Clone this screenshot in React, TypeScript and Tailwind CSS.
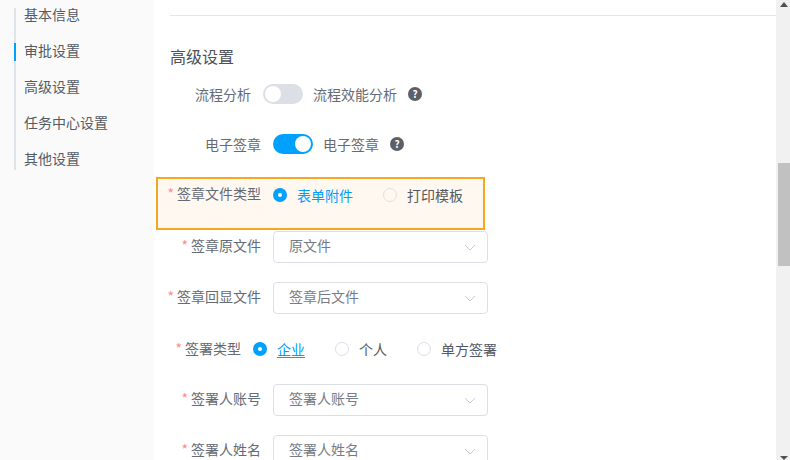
const menuItems = ['基本信息', '审批设置', '高级设置', '任务中心设置', '其他设置']

function HelpIcon() {
  return (
    <span className="-ml-px flex h-[14px] w-[14px] items-center justify-center rounded-full bg-[#5c5f66] text-[10px] font-bold leading-none text-white">
      ?
    </span>
  )
}

function Toggle({ on }: { on: boolean }) {
  return (
    <span
      className={`flex h-5 w-10 items-center rounded-full p-[2px] ${
        on ? 'justify-end bg-[#00a0ff]' : 'justify-start bg-[#dcdfe6]'
      }`}
    >
      <span className="h-4 w-4 rounded-full bg-white" />
    </span>
  )
}

function Label({ text, required, width, className }: { text: string; required?: boolean; width: string; className?: string }) {
  return (
    <span className={`${width} ${className ?? ''} flex shrink-0 justify-end whitespace-nowrap text-[14px] text-[#666a73]`}>
      {required && <span className="mr-[3px] text-[#ff8a8a]">*</span>}
      {text}
    </span>
  )
}

function Radio({ text, checked, underline, muted }: { text: string; checked?: boolean; underline?: boolean; muted?: boolean }) {
  return (
    <span className="flex items-center gap-[10px]">
      {checked ? (
        <span className="flex h-[14px] w-[14px] items-center justify-center rounded-full bg-[#00a0ff]">
          <span className="h-1 w-1 rounded-full bg-white" />
        </span>
      ) : (
        <span className={`h-[14px] w-[14px] rounded-full border ${muted ? 'border-[#e4e0da]' : 'border-[#dcdfe6]'}`} />
      )}
      <span className={`text-[14px] ${checked ? 'text-[#00a0ff]' : 'text-[#55585f]'} ${underline ? 'underline underline-offset-2' : ''}`}>
        {text}
      </span>
    </span>
  )
}

function SelectRow({ label, value, width, className }: { label: string; value: string; width: string; className?: string }) {
  return (
    <div className={`flex h-8 shrink-0 items-center gap-3 ${className ?? ''}`}>
      <Label text={label} required width={width} className="mb-1" />
      <div className="flex h-8 w-[215px] items-center justify-between rounded border border-[#dcdfe6] bg-white pl-[15px] pr-[11px] text-[14px] text-[#777b84]">
        <span className="mb-1">{value}</span>
        <svg width="12" height="7" viewBox="0 0 12 7" fill="none" stroke="#c8ccd4" strokeWidth="1">
          <path d="M1 1l5 5 5-5" />
        </svg>
      </div>
    </div>
  )
}

export default function App() {
  return (
    <div
      className="flex h-[460px] w-[790px] overflow-hidden bg-white"
      style={{ fontFamily: '"Noto Sans CJK SC", "Noto Sans", sans-serif' }}
    >
      <aside className="w-[154px] shrink-0 bg-[#fafafa] pl-[14px] pt-2">
        <div className="flex h-[162px] flex-col border-l-2 border-[#dfe3ea]">
          {menuItems.map((item, i) => (
            <div key={item} className={`flex h-9 shrink-0 items-center text-[14px] text-[#555a63] ${i === 0 ? '-mt-[11px]' : ''}`}>
              <span className={`-ml-[2px] mt-[2px] h-[18px] w-[2px] shrink-0 ${i === 1 ? 'bg-[#00a0ff]' : ''}`} />
              <span className="mb-[2px] ml-[8px]">{item}</span>
            </div>
          ))}
        </div>
      </aside>

      <main className="flex min-w-0 flex-1 flex-col pl-4 pt-[15px]">
        <div className="h-px shrink-0 bg-[#e4e6eb]" />
        <h2 className="mt-[29px] h-[22px] shrink-0 text-[16px] font-normal leading-[22px] text-[#4d5058]">高级设置</h2>

        <div className="mt-[17px] flex h-5 shrink-0 items-center gap-3">
          <Label text="流程分析" width="w-[81px]" />
          <Toggle on={false} />
          <span className="ml-[-2px] text-[14px] text-[#666a73]">流程效能分析</span>
          <HelpIcon />
        </div>

        <div className="mt-[30px] flex h-5 shrink-0 items-center gap-3">
          <Label text="电子签章" width="w-[91px]" />
          <Toggle on />
          <span className="ml-[-2px] text-[14px] text-[#666a73]">电子签章</span>
          <HelpIcon />
        </div>

        <div className="-ml-[14px] mt-[23px] flex h-[53px] w-[329px] shrink-0 items-start border-2 border-[#f5a623] bg-[#fff8f0] pt-[5px]">
          <span className="flex h-5 items-center gap-3">
            <Label text="签章文件类型" required width="w-[103px]" className="mb-[2px]" />
            <span className="mt-[2px] flex gap-[30px]">
              <Radio text="表单附件" checked />
              <Radio text="打印模板" muted />
            </span>
          </span>
        </div>

        <SelectRow className="mt-px" label="签章原文件" value="原文件" width="w-[91px]" />
        <SelectRow className="mt-[19px]" label="签章回显文件" value="签章后文件" width="w-[91px]" />

        <div className="mt-[25px] flex h-5 shrink-0 items-center gap-3">
          <Label text="签署类型" required width="w-[71px]" className="mb-[2px]" />
          <span className="flex gap-[30px]">
            <Radio text="企业" checked underline />
            <Radio text="个人" />
            <Radio text="单方签署" />
          </span>
        </div>

        <SelectRow className="mt-[25px]" label="签署人账号" value="签署人账号" width="w-[91px]" />
        <SelectRow className="mt-[19px]" label="签署人姓名" value="签署人姓名" width="w-[91px]" />
      </main>

      <div className="flex w-[14px] shrink-0 flex-col bg-[#f1f1f1]">
        <svg className="ml-[4px] mt-[2px] shrink-0" width="8" height="5" viewBox="0 0 8 5" fill="#505050">
          <path d="M4 0l4 5H0z" />
        </svg>
        <div className="ml-[2px] mt-[156px] h-[103px] shrink-0 bg-[#c1c1c1]" />
        <svg className="ml-[4px] mt-[190px] shrink-0" width="8" height="4" viewBox="0 0 8 4" fill="#505050">
          <path d="M0 0h8L4 4z" />
        </svg>
      </div>
    </div>
  )
}
